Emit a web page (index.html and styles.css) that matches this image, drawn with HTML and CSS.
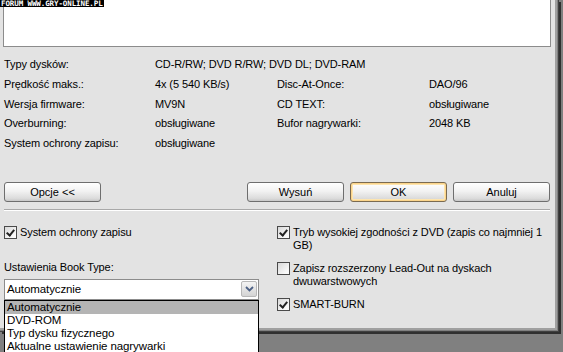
FILE: index.html
```html
<!DOCTYPE html>
<html lang="pl">

<head>
    <meta charset="UTF-8">
    <title>Właściwości nagrywarki</title>
    <link rel="stylesheet" href="styles.css">
</head>

<body>
    <div class="watermark">FORUM WWW.GRY-ONLINE.PL</div>

    <div class="dialog">
        <div class="log-box"></div>

        <div class="info">
            <span>Typy dysków:</span>
            <span class="wide">CD-R/RW; DVD R/RW; DVD DL; DVD-RAM</span>

            <span>Prędkość maks.:</span>
            <span>4x (5 540 KB/s)</span>
            <span>Disc-At-Once:</span>
            <span>DAO/96</span>

            <span>Wersja firmware:</span>
            <span>MV9N</span>
            <span>CD TEXT:</span>
            <span>obsługiwane</span>

            <span>Overburning:</span>
            <span>obsługiwane</span>
            <span>Bufor nagrywarki:</span>
            <span>2048 KB</span>

            <span>System ochrony zapisu:</span>
            <span>obsługiwane</span>
        </div>

        <div class="buttons">
            <button class="btn">Opcje &lt;&lt;</button>
            <div class="spacer"></div>
            <button class="btn">Wysuń</button>
            <button class="btn btn-default">OK</button>
            <button class="btn">Anuluj</button>
        </div>

        <div class="separator"></div>

        <div class="options">
            <div class="col-left">
                <div class="check">
                    <span class="box checked"></span>
                    <span class="check-label">System ochrony zapisu</span>
                </div>
                <div class="field-label">Ustawienia Book Type:</div>
                <div class="select">
                    <span class="select-value">Automatycznie</span>
                    <span class="select-arrow">
                        <svg width="9" height="6" viewBox="0 0 9 6">
                            <path d="M1 1 L4.5 4.5 L8 1" fill="none" stroke="#4d6185" stroke-width="1.8"/>
                        </svg>
                    </span>
                    <ul class="dropdown">
                        <li class="selected">Automatycznie</li>
                        <li>DVD-ROM</li>
                        <li>Typ dysku fizycznego</li>
                        <li>Aktualne ustawienie nagrywarki</li>
                    </ul>
                </div>
            </div>

            <div class="col-right">
                <div class="check">
                    <span class="box checked"></span>
                    <span class="check-label">Tryb wysokiej zgodności z DVD (zapis co najmniej 1 GB)</span>
                </div>
                <div class="check">
                    <span class="box"></span>
                    <span class="check-label">Zapisz rozszerzony Lead-Out na dyskach dwuwarstwowych</span>
                </div>
                <div class="check">
                    <span class="box checked"></span>
                    <span class="check-label">SMART-BURN</span>
                </div>
            </div>
        </div>
    </div>
</body>

</html>
```

FILE: styles.css
```css
* {
    margin: 0;
    padding: 0;
    box-sizing: border-box;
}

body {
    background: #808080;
    font-family: 'Liberation Sans', Arial, sans-serif;
    font-size: 11px;
    letter-spacing: -0.1px;
    color: #000;
    width: 563px;
    height: 352px;
    overflow: hidden;
}

.watermark {
    position: absolute;
    top: 0;
    left: 0;
    z-index: 5;
    background: #000;
    color: #fff;
    font-family: 'DejaVu Sans Mono', monospace;
    font-size: 7.5px;
    font-weight: bold;
    line-height: 7px;
    height: 7px;
    padding: 0 1px;
    letter-spacing: -0.1px;
}

.dialog {
    width: 559px;
    height: 332px;
    background: #e3e3e3;
    border-right: 1px solid #404040;
    border-bottom: 1px solid #404040;
    box-shadow: inset -1px -1px 0 #808080, inset -3px -3px 0 #a0a0a0, 2px 2px 0 #303030;
    padding: 0 6px 0 4px;
    position: relative;
}

.log-box {
    height: 47px;
    margin-left: -1px;
    width: 548px;
    background: #fff;
    border-left: 1px solid #8c8c8c;
    border-right: 1px solid #8c8c8c;
    border-bottom: 1px solid #8c8c8c;
}

/* Info */
.info {
    display: grid;
    grid-template-columns: 151px 122px 152px auto;
    grid-auto-rows: 19.75px;
    margin-top: 8px;
    line-height: 19.75px;
    white-space: nowrap;
}

.info .wide {
    grid-column: 2 / 5;
}

/* Buttons */
.buttons {
    display: flex;
    gap: 6px;
    margin-top: 28px;
    width: 546px;
}

.spacer {
    flex-grow: 1;
}

.btn {
    width: 97px;
    height: 20px;
    font-family: inherit;
    font-size: 11px;
    color: #000;
    border: 1px solid #6e6e6e;
    border-radius: 3px;
    background: linear-gradient(#ffffff, #f2f2f2 45%, #dcdcdc 85%, #c8c8c8);
}

.btn-default {
    border-color: #7a6a50;
    box-shadow: inset 0 0 0 1px #fbd48a, inset 0 0 0 2px #fde5b0;
}

.separator {
    margin-top: 7px;
    width: 546px;
    height: 2px;
    border-top: 1px solid #a8a8a8;
    border-bottom: 1px solid #fff;
}

/* Options */
.options {
    display: flex;
    margin-top: 15px;
}

.col-left {
    width: 273px;
}

.col-right {
    width: 268px;
    display: flex;
    flex-direction: column;
    gap: 10px;
}

.check {
    display: flex;
    align-items: flex-start;
    gap: 3px;
    line-height: 13px;
}

.box {
    flex: none;
    width: 13px;
    height: 13px;
    border: 1px solid #4a4a4a;
    background: linear-gradient(135deg, #d8d8d8, #fafafa 80%);
    position: relative;
}

.box.checked::after {
    content: "";
    position: absolute;
    left: 3px;
    top: 1px;
    width: 3px;
    height: 6px;
    border-right: 2px solid #222;
    border-bottom: 2px solid #222;
    transform: rotate(40deg);
}

.field-label {
    margin-top: 22px;
    line-height: 13px;
}

.select {
    position: relative;
    margin-top: 5px;
    width: 255px;
    height: 21px;
    background: #fff;
    border: 1px solid #8c8c8c;
    display: flex;
    align-items: center;
}

.select-value {
    flex-grow: 1;
    padding-left: 2px;
    font-size: 11.5px;
}

.select-arrow {
    width: 16px;
    height: 16px;
    margin-right: 1px;
    border: 1px solid #b8b8b8;
    border-radius: 2px;
    background: linear-gradient(#f4f4f4, #d4d4d4);
    display: flex;
    align-items: center;
    justify-content: center;
}

.dropdown {
    position: absolute;
    left: -1px;
    top: 20px;
    width: 255px;
    background: #fff;
    border: 1px solid #000;
    list-style: none;
    z-index: 3;
}

.dropdown li {
    height: 13px;
    line-height: 13px;
    padding-left: 2px;
    font-size: 11.5px;
    white-space: nowrap;
}

.dropdown li.selected {
    background: #b4b4b4;
}
```
